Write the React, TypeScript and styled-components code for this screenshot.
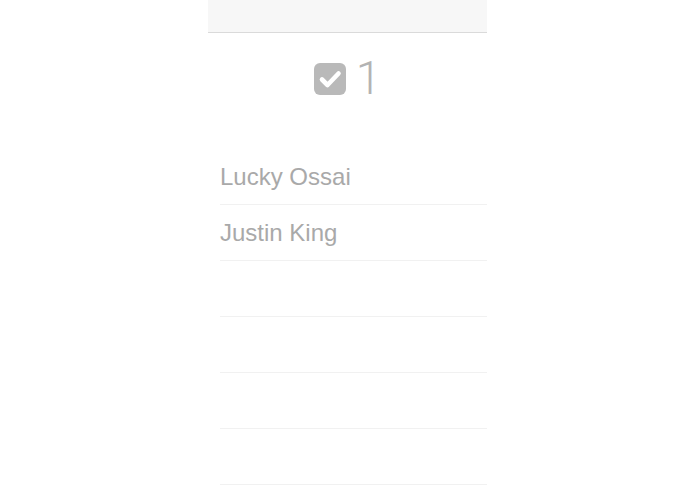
import React from 'react';
import styled, { createGlobalStyle } from 'styled-components';

const GlobalStyle = createGlobalStyle`
  html, body {
    margin: 0;
    padding: 0;
    background: #ffffff;
  }
  body {
    font-family: "Liberation Sans", Arial, sans-serif;
  }
`;

const Column = styled.div`
  width: 279px;
  margin: 0 auto;
`;

const TopBar = styled.div`
  height: 32px;
  background: #f7f7f7;
  border-bottom: 1px solid #dadada;
`;

const Counter = styled.div`
  display: flex;
  align-items: center;
  justify-content: center;
  gap: 10px;
  height: 48px;
  padding: 22px 0 46px;
`;

const Count = styled.span`
  font-family: Roboto, "Liberation Sans", sans-serif;
  font-weight: 300;
  font-size: 46px;
  line-height: 48px;
  color: #b3b3b3;
  margin-top: -3px;
`;

const List = styled.ul`
  list-style: none;
  margin: 0;
  padding: 0 0 0 12px;
`;

const Row = styled.li`
  height: 55px;
  display: flex;
  align-items: center;
  border-bottom: 1px solid #f1f1f1;
  font-size: 24px;
  color: #a9a9a9;
`;

const CheckBox: React.FC = () => (
  <svg width="32" height="32" viewBox="0 0 32 32">
    <rect x="0" y="0" width="32" height="32" rx="6" fill="#b9b9b9" />
    <polyline
      points="8,16.5 13.5,22 24.5,10.5"
      fill="none"
      stroke="#ffffff"
      strokeWidth="4.6"
      strokeLinecap="round"
      strokeLinejoin="round"
    />
  </svg>
);

const people = ['Lucky Ossai', 'Justin King', '', '', '', ''];

const App: React.FC = () => {
  return (
    <>
      <GlobalStyle />
      <Column>
        <TopBar />
        <Counter>
          <CheckBox />
          <Count>1</Count>
        </Counter>
        <List>
          {people.map((name, i) => (
            <Row key={i}>{name}</Row>
          ))}
        </List>
      </Column>
    </>
  );
};

export default App;
